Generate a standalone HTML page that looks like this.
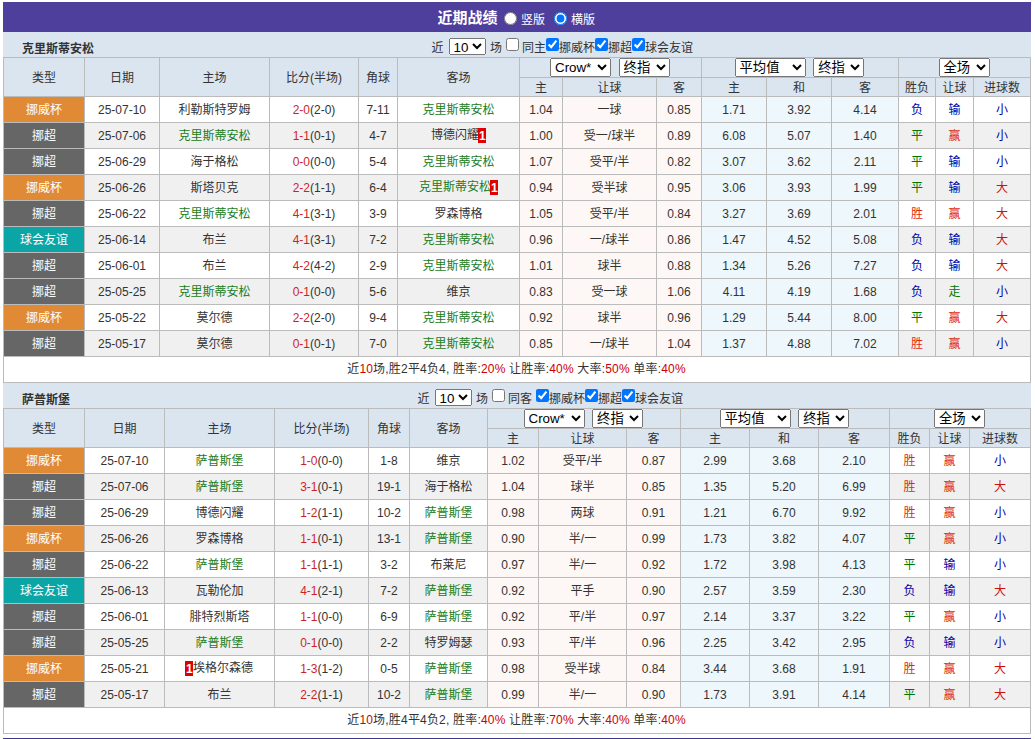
<!DOCTYPE html>
<html lang="zh-CN"><head><meta charset="utf-8"><title>近期战绩</title>
<style>
html,body{margin:0;padding:0;background:#fff;}
body{width:1035px;height:739px;overflow:hidden;font-family:"Liberation Sans","Noto Sans CJK SC",sans-serif;font-size:12px;color:#333;}
.wrap{position:absolute;left:3px;top:2px;width:1028px;height:738px;box-sizing:border-box;border-bottom:2px solid #43368f;}
.hd{position:relative;height:30px;background:#4f3f9d;color:#fff;margin:0;font-size:12px;white-space:nowrap;display:flex;align-items:center;padding-left:434.5px;box-sizing:border-box;}
.hd b{font-size:15px;position:relative;top:-0.5px;}
.hd span{position:relative;top:1px;}
.hd input{margin:0;width:13px;height:13px;position:relative;top:1px;}
.hd .r1{margin:0 4px 0 6.5px;}
.hd .r2{margin:0 4px 0 9px;}
.tt{position:relative;height:25px;background:#dbe5f0;margin:0;}
.tn{position:absolute;left:19px;top:5px;line-height:25px;font-size:12px;}
.ctl{position:absolute;left:428.5px;top:0;height:25px;display:flex;align-items:center;white-space:nowrap;font-size:12px;}
.ctl span{position:relative;top:2px;}
.ctl input{width:13px;height:13px;margin:0;}
.ctl .c1{margin:0 3px 0 4px;}
.ctl .ch{margin-left:4.5px;}
select{font-family:"Liberation Sans","Noto Sans CJK SC",sans-serif;font-size:13.33px;padding:0;margin:0;height:18.5px;box-sizing:border-box;color:#000;}
.ctl .s10{width:37px;height:17px;margin-left:5px;position:relative;top:2px;}
.sc{width:61px;}.sz{width:51px;}.sa{width:71px;}.sq{width:51px;}
.tb{border-collapse:collapse;table-layout:fixed;width:1027px;margin:0;}
.tb th,.tb td{border:1px solid #bbb;text-align:center;padding:0;font-weight:normal;overflow:hidden;white-space:nowrap;}
.tb th{background:#dbe5f0;color:#333;}
.tb th.g{font-size:0;line-height:0;vertical-align:middle;}
.tb th.g select{margin:0 4.5px 0 3.1px;vertical-align:middle;}
.h1{height:20px;}
.h2{height:19px;}
.h1 th[rowspan]{padding-bottom:2px;}
.h2 th{padding-bottom:1px;}
.tb td.z{padding-bottom:2px;height:23px;}
.tb td{height:25px;}
tr.o td{background:#fff;}
tr.e td{background:#f0f0f0;}
tr td.p{background:#fdf8f5;}
tr td.q{background:#eef7fb;}
tr td.t-cup{background:#e08a35;color:#fff;}
tr td.t-lg{background:#666;color:#fff;}
tr td.t-fr{background:#0ca5a6;color:#fff;}
.me{color:#1a7c1a;}
.sr{color:#cf1f1f;}
.rc{display:inline-block;background:#e00000;color:#fff;font-weight:bold;width:7.7px;height:14.6px;line-height:16.6px;vertical-align:middle;margin-left:-0.6px;text-align:center;position:relative;top:-0.5px;overflow:hidden;letter-spacing:-0.5px;}
.r{color:#e02a10;}.r.big{color:#cc1111;}.b{color:#00a;}.g{color:#070;}
.sm{height:25px;line-height:25px;text-align:center;background:#fff;border:1px solid #bbb;border-top:0;letter-spacing:0.19px;padding-right:1px;box-sizing:content-box;width:1025px;}
.sm i{font-style:normal;color:#c00;}
.ctl.k2{left:414.5px;}
.ctl.k2 .c2{margin-left:4px;}
.tb th.g select.sq{margin:0 1px 0 0;}

</style></head><body>
<div class="wrap">
<div class="hd"><b>近期战绩</b><input type="radio" name="v" class="r1"><span>竖版</span><input type="radio" name="v" class="r2" checked><span>横版</span></div>
<div class="tt"><b class="tn">克里斯蒂安松</b><div class="ctl k1"><span>近</span><select class="s10"><option>10</option></select><span class="ch">场</span><input type="checkbox" class="c1"><span>同主</span><input type="checkbox" class="c2" checked><span>挪威杯</span><input type="checkbox" checked><span>挪超</span><input type="checkbox" checked><span>球会友谊</span></div></div>
<table class="tb"><colgroup><col style="width:81px"><col style="width:75px"><col style="width:110px"><col style="width:89px"><col style="width:39px"><col style="width:122px"><col style="width:43px"><col style="width:94px"><col style="width:45px"><col style="width:65px"><col style="width:65px"><col style="width:67px"><col style="width:37px"><col style="width:38px"><col style="width:57px"></colgroup>
<tr class="h1"><th rowspan="2">类型</th><th rowspan="2">日期</th><th rowspan="2">主场</th><th rowspan="2">比分(半场)</th><th rowspan="2">角球</th><th rowspan="2">客场</th><th colspan="3" class="g"><select class="sc"><option>Crow*</option></select><select class="sz"><option>终指</option></select></th><th colspan="3" class="g"><select class="sa"><option>平均值</option></select><select class="sz"><option>终指</option></select></th><th colspan="3" class="g"><select class="sq"><option>全场</option></select></th></tr>
<tr class="h2"><th>主</th><th>让球</th><th>客</th><th>主</th><th>和</th><th>客</th><th>胜负</th><th>让球</th><th>进球数</th></tr>
<tr class="o"><td class="z t-cup">挪威杯</td><td>25-07-10</td><td class="z">利勒斯特罗姆</td><td><span class="sr">2-0</span>(2-0)</td><td>7-11</td><td class="z"><span class="me">克里斯蒂安松</span></td><td class="p">1.04</td><td class="p z">一球</td><td class="p">0.85</td><td class="q">1.71</td><td class="q">3.92</td><td class="q">4.14</td><td class="z b">负</td><td class="z b">输</td><td class="z b">小</td></tr>
<tr class="e"><td class="z t-lg">挪超</td><td>25-07-06</td><td class="z"><span class="me">克里斯蒂安松</span></td><td><span class="sr">1-1</span>(0-1)</td><td>4-7</td><td class="z"><span>博德闪耀</span><span class="rc">1</span></td><td class="p">1.00</td><td class="p z">受一/球半</td><td class="p">0.89</td><td class="q">6.08</td><td class="q">5.07</td><td class="q">1.40</td><td class="z g">平</td><td class="z r">赢</td><td class="z b">小</td></tr>
<tr class="o"><td class="z t-lg">挪超</td><td>25-06-29</td><td class="z">海于格松</td><td><span class="sr">0-0</span>(0-0)</td><td>5-4</td><td class="z"><span class="me">克里斯蒂安松</span></td><td class="p">1.07</td><td class="p z">受平/半</td><td class="p">0.82</td><td class="q">3.07</td><td class="q">3.62</td><td class="q">2.11</td><td class="z g">平</td><td class="z b">输</td><td class="z b">小</td></tr>
<tr class="e"><td class="z t-cup">挪威杯</td><td>25-06-26</td><td class="z">斯塔贝克</td><td><span class="sr">2-2</span>(1-1)</td><td>6-4</td><td class="z"><span class="me">克里斯蒂安松</span><span class="rc">1</span></td><td class="p">0.94</td><td class="p z">受半球</td><td class="p">0.95</td><td class="q">3.06</td><td class="q">3.93</td><td class="q">1.99</td><td class="z g">平</td><td class="z b">输</td><td class="z r big">大</td></tr>
<tr class="o"><td class="z t-lg">挪超</td><td>25-06-22</td><td class="z"><span class="me">克里斯蒂安松</span></td><td><span class="sr">4-1</span>(3-1)</td><td>3-9</td><td class="z">罗森博格</td><td class="p">1.05</td><td class="p z">受平/半</td><td class="p">0.84</td><td class="q">3.27</td><td class="q">3.69</td><td class="q">2.01</td><td class="z r">胜</td><td class="z r">赢</td><td class="z r big">大</td></tr>
<tr class="e"><td class="z t-fr">球会友谊</td><td>25-06-14</td><td class="z">布兰</td><td><span class="sr">4-1</span>(3-1)</td><td>7-2</td><td class="z"><span class="me">克里斯蒂安松</span></td><td class="p">0.96</td><td class="p z">一/球半</td><td class="p">0.86</td><td class="q">1.47</td><td class="q">4.52</td><td class="q">5.08</td><td class="z b">负</td><td class="z b">输</td><td class="z r big">大</td></tr>
<tr class="o"><td class="z t-lg">挪超</td><td>25-06-01</td><td class="z">布兰</td><td><span class="sr">4-2</span>(4-2)</td><td>2-9</td><td class="z"><span class="me">克里斯蒂安松</span></td><td class="p">1.01</td><td class="p z">球半</td><td class="p">0.88</td><td class="q">1.34</td><td class="q">5.26</td><td class="q">7.27</td><td class="z b">负</td><td class="z b">输</td><td class="z r big">大</td></tr>
<tr class="e"><td class="z t-lg">挪超</td><td>25-05-25</td><td class="z"><span class="me">克里斯蒂安松</span></td><td><span class="sr">0-1</span>(0-0)</td><td>5-6</td><td class="z">维京</td><td class="p">0.83</td><td class="p z">受一球</td><td class="p">1.06</td><td class="q">4.11</td><td class="q">4.19</td><td class="q">1.68</td><td class="z b">负</td><td class="z g">走</td><td class="z b">小</td></tr>
<tr class="o"><td class="z t-cup">挪威杯</td><td>25-05-22</td><td class="z">莫尔德</td><td><span class="sr">2-2</span>(2-0)</td><td>9-4</td><td class="z"><span class="me">克里斯蒂安松</span></td><td class="p">0.92</td><td class="p z">球半</td><td class="p">0.96</td><td class="q">1.29</td><td class="q">5.44</td><td class="q">8.00</td><td class="z g">平</td><td class="z r">赢</td><td class="z r big">大</td></tr>
<tr class="e"><td class="z t-lg">挪超</td><td>25-05-17</td><td class="z">莫尔德</td><td><span class="sr">0-1</span>(0-1)</td><td>7-0</td><td class="z"><span class="me">克里斯蒂安松</span></td><td class="p">0.85</td><td class="p z">一/球半</td><td class="p">1.04</td><td class="q">1.37</td><td class="q">4.88</td><td class="q">7.02</td><td class="z r">胜</td><td class="z r">赢</td><td class="z b">小</td></tr>
</table>
<div class="sm">近<i>10</i>场,胜2平4负4, 胜率:<i>20%</i> 让胜率:<i>40%</i> 大率:<i>50%</i> 单率:<i>40%</i></div>
<div class="tt"><b class="tn">萨普斯堡</b><div class="ctl k2"><span>近</span><select class="s10"><option>10</option></select><span class="ch">场</span><input type="checkbox" class="c1"><span>同客</span><input type="checkbox" class="c2" checked><span>挪威杯</span><input type="checkbox" checked><span>挪超</span><input type="checkbox" checked><span>球会友谊</span></div></div>
<table class="tb"><colgroup><col style="width:81px"><col style="width:80px"><col style="width:110px"><col style="width:94px"><col style="width:41px"><col style="width:78px"><col style="width:51px"><col style="width:88px"><col style="width:54px"><col style="width:69px"><col style="width:69px"><col style="width:71px"><col style="width:40px"><col style="width:40px"><col style="width:61px"></colgroup>
<tr class="h1"><th rowspan="2">类型</th><th rowspan="2">日期</th><th rowspan="2">主场</th><th rowspan="2">比分(半场)</th><th rowspan="2">角球</th><th rowspan="2">客场</th><th colspan="3" class="g"><select class="sc"><option>Crow*</option></select><select class="sz"><option>终指</option></select></th><th colspan="3" class="g"><select class="sa"><option>平均值</option></select><select class="sz"><option>终指</option></select></th><th colspan="3" class="g"><select class="sq"><option>全场</option></select></th></tr>
<tr class="h2"><th>主</th><th>让球</th><th>客</th><th>主</th><th>和</th><th>客</th><th>胜负</th><th>让球</th><th>进球数</th></tr>
<tr class="o"><td class="z t-cup">挪威杯</td><td>25-07-10</td><td class="z"><span class="me">萨普斯堡</span></td><td><span class="sr">1-0</span>(0-0)</td><td>1-8</td><td class="z">维京</td><td class="p">1.02</td><td class="p z">受平/半</td><td class="p">0.87</td><td class="q">2.99</td><td class="q">3.68</td><td class="q">2.10</td><td class="z r">胜</td><td class="z r">赢</td><td class="z b">小</td></tr>
<tr class="e"><td class="z t-lg">挪超</td><td>25-07-06</td><td class="z"><span class="me">萨普斯堡</span></td><td><span class="sr">3-1</span>(0-1)</td><td>19-1</td><td class="z">海于格松</td><td class="p">1.04</td><td class="p z">球半</td><td class="p">0.85</td><td class="q">1.35</td><td class="q">5.20</td><td class="q">6.99</td><td class="z r">胜</td><td class="z r">赢</td><td class="z r big">大</td></tr>
<tr class="o"><td class="z t-lg">挪超</td><td>25-06-29</td><td class="z">博德闪耀</td><td><span class="sr">1-2</span>(1-1)</td><td>10-2</td><td class="z"><span class="me">萨普斯堡</span></td><td class="p">0.98</td><td class="p z">两球</td><td class="p">0.91</td><td class="q">1.21</td><td class="q">6.70</td><td class="q">9.92</td><td class="z r">胜</td><td class="z r">赢</td><td class="z b">小</td></tr>
<tr class="e"><td class="z t-cup">挪威杯</td><td>25-06-26</td><td class="z">罗森博格</td><td><span class="sr">1-1</span>(0-1)</td><td>13-1</td><td class="z"><span class="me">萨普斯堡</span></td><td class="p">0.90</td><td class="p z">半/一</td><td class="p">0.99</td><td class="q">1.73</td><td class="q">3.82</td><td class="q">4.07</td><td class="z g">平</td><td class="z r">赢</td><td class="z b">小</td></tr>
<tr class="o"><td class="z t-lg">挪超</td><td>25-06-22</td><td class="z"><span class="me">萨普斯堡</span></td><td><span class="sr">1-1</span>(1-1)</td><td>3-2</td><td class="z">布莱尼</td><td class="p">0.97</td><td class="p z">半/一</td><td class="p">0.92</td><td class="q">1.72</td><td class="q">3.98</td><td class="q">4.13</td><td class="z g">平</td><td class="z b">输</td><td class="z b">小</td></tr>
<tr class="e"><td class="z t-fr">球会友谊</td><td>25-06-13</td><td class="z">瓦勒伦加</td><td><span class="sr">4-1</span>(2-1)</td><td>7-2</td><td class="z"><span class="me">萨普斯堡</span></td><td class="p">0.92</td><td class="p z">平手</td><td class="p">0.90</td><td class="q">2.57</td><td class="q">3.59</td><td class="q">2.30</td><td class="z b">负</td><td class="z b">输</td><td class="z r big">大</td></tr>
<tr class="o"><td class="z t-lg">挪超</td><td>25-06-01</td><td class="z">腓特烈斯塔</td><td><span class="sr">1-1</span>(0-0)</td><td>6-9</td><td class="z"><span class="me">萨普斯堡</span></td><td class="p">0.92</td><td class="p z">平/半</td><td class="p">0.97</td><td class="q">2.14</td><td class="q">3.37</td><td class="q">3.22</td><td class="z g">平</td><td class="z r">赢</td><td class="z b">小</td></tr>
<tr class="e"><td class="z t-lg">挪超</td><td>25-05-25</td><td class="z"><span class="me">萨普斯堡</span></td><td><span class="sr">0-1</span>(0-0)</td><td>2-2</td><td class="z">特罗姆瑟</td><td class="p">0.93</td><td class="p z">平/半</td><td class="p">0.96</td><td class="q">2.25</td><td class="q">3.42</td><td class="q">2.95</td><td class="z b">负</td><td class="z b">输</td><td class="z b">小</td></tr>
<tr class="o"><td class="z t-cup">挪威杯</td><td>25-05-21</td><td class="z"><span class="rc">1</span>埃格尔森德</td><td><span class="sr">1-3</span>(1-2)</td><td>0-5</td><td class="z"><span class="me">萨普斯堡</span></td><td class="p">0.98</td><td class="p z">受半球</td><td class="p">0.84</td><td class="q">3.44</td><td class="q">3.68</td><td class="q">1.91</td><td class="z r">胜</td><td class="z r">赢</td><td class="z r big">大</td></tr>
<tr class="e"><td class="z t-lg">挪超</td><td>25-05-17</td><td class="z">布兰</td><td><span class="sr">2-2</span>(1-1)</td><td>10-2</td><td class="z"><span class="me">萨普斯堡</span></td><td class="p">0.99</td><td class="p z">半/一</td><td class="p">0.90</td><td class="q">1.73</td><td class="q">3.91</td><td class="q">4.14</td><td class="z g">平</td><td class="z r">赢</td><td class="z r big">大</td></tr>
</table>
<div class="sm">近<i>10</i>场,胜4平4负2, 胜率:<i>40%</i> 让胜率:<i>70%</i> 大率:<i>40%</i> 单率:<i>40%</i></div>
</div>
</body></html>
